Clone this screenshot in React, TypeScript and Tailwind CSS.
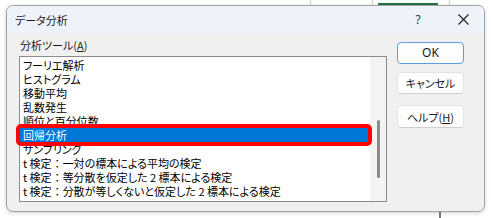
export default function App() {
  const items: { pre?: string; text: string }[] = [
    { text: "フーリエ解析" },
    { text: "ヒストグラム" },
    { text: "移動平均" },
    { text: "乱数発生" },
    { text: "順位と百分位数" },
    { text: "回帰分析" },
    { text: "サンプリング" },
    { pre: "t 検定", text: "一対の標本による平均の検定" },
    { pre: "t 検定", text: "等分散を仮定した 2 標本による検定" },
    { pre: "t 検定", text: "分散が等しくないと仮定した 2 標本による検定" },
  ];
  const selected = 5;
  return (
    <div className="relative w-[491px] h-[218px] bg-white overflow-hidden font-['Noto_Sans_CJK_JP','Noto_Sans',sans-serif] [font-feature-settings:'palt'] text-black">
      {/* spreadsheet remnants behind the dialog */}
      <div className="absolute left-[310px] top-0 w-px h-[6px] bg-[#d4d4d4]" />
      <div className="absolute left-[372px] top-0 w-px h-[6px] bg-[#d4d4d4]" />
      <div className="absolute left-[449px] top-0 w-px h-[6px] bg-[#d4d4d4]" />
      <div className="absolute left-[378px] top-[3px] w-[60px] h-[2px] bg-[#217346]" />
      <div className="absolute left-[439px] top-[211px] w-[2px] h-[7px] bg-[#7a7a7a]" />

      <div className="relative ml-[6px] mt-[5px] w-[479px] h-[207px] rounded-[7px] border border-[#a3a3a3] bg-[#f0f0f0] overflow-hidden flex flex-col shadow-[0_1px_4px_rgba(0,0,0,0.18)]">
        {/* title bar */}
        <div className="h-[27px] shrink-0 bg-[#eef3f9] flex items-center pl-[8px] pr-[11px]">
          <span className="text-[11px] leading-[14px] text-[#1a1a1a]">データ分析</span>
          <span className="ml-auto w-[20px] text-center text-[12px] leading-[14px] text-[#333] font-['Noto_Sans',sans-serif]">?</span>
          <span className="ml-[25px] w-[20px] flex justify-center">
            <svg width="11" height="11" viewBox="0 0 11 11" fill="none">
              <path d="M0.5 0.5 L10.5 10.5 M10.5 0.5 L0.5 10.5" stroke="#1f1f1f" strokeWidth="1.1" />
            </svg>
          </span>
        </div>

        {/* body */}
        <div className="flex flex-1 pl-[12px]">
          <div className="flex flex-col">
            <div className="mt-[6px] ml-[1px] h-[12px] text-[11px] leading-[12px] text-[#1a1a1a]">
              分析ツール(<span className="underline underline-offset-[1px]">A</span>)
            </div>
            <div className="mt-[5px] relative w-[368px] h-[146px] border border-[#8c8c8c] bg-white flex">
              <div className="flex-1 pt-[1px] pr-[2px] overflow-hidden">
                {items.map((it, i) => (
                  <div
                    key={i}
                    className={
                      "h-[14px] pl-[3px] text-[11px] leading-[14px] whitespace-pre " +
                      (i === selected ? "bg-[#0078d7] text-white" : "text-black")
                    }
                  >
                    {it.pre ? (
                      <>
                        {it.pre}
                        <span className="[font-feature-settings:normal]">：</span>
                        {it.text}
                      </>
                    ) : (
                      it.text
                    )}
                  </div>
                ))}
              </div>
              <div className="relative w-[16px] bg-[#f3f3f3]">
                <div className="absolute left-[7px] top-[63px] w-[3px] h-[58px] rounded-full bg-[#8a8a8a]" />
              </div>
              {/* red highlight */}
              <div className="absolute left-[-4px] top-[67px] w-[356px] h-[22px] border-[4px] border-[#ff0000] rounded-[5px]" />
            </div>
          </div>

          <div className="ml-[10px] mt-[9px] flex flex-col w-[67px]">
            <div className="h-[22px] rounded-[4px] border border-[#5b9fe3] bg-[#fdfdfd] flex items-center justify-center text-[12px] leading-[14px] font-['Noto_Sans',sans-serif] text-[#1a1a1a]">
              OK
            </div>
            <div className="mt-[8px] h-[22px] rounded-[4px] border border-[#e3e3e3] border-b-[#cfcfcf] bg-[#fdfdfd] flex items-center justify-center text-[11px] leading-[14px] text-[#1a1a1a]">
              キャンセル
            </div>
            <div className="mt-[11px] h-[23px] rounded-[4px] border border-[#e3e3e3] border-b-[#cfcfcf] bg-[#fdfdfd] flex items-center justify-center text-[11px] leading-[14px] text-[#1a1a1a]">
              ヘルプ(<span className="underline underline-offset-[1px]">H</span>)
            </div>
          </div>
        </div>
      </div>
    </div>
  );
}
